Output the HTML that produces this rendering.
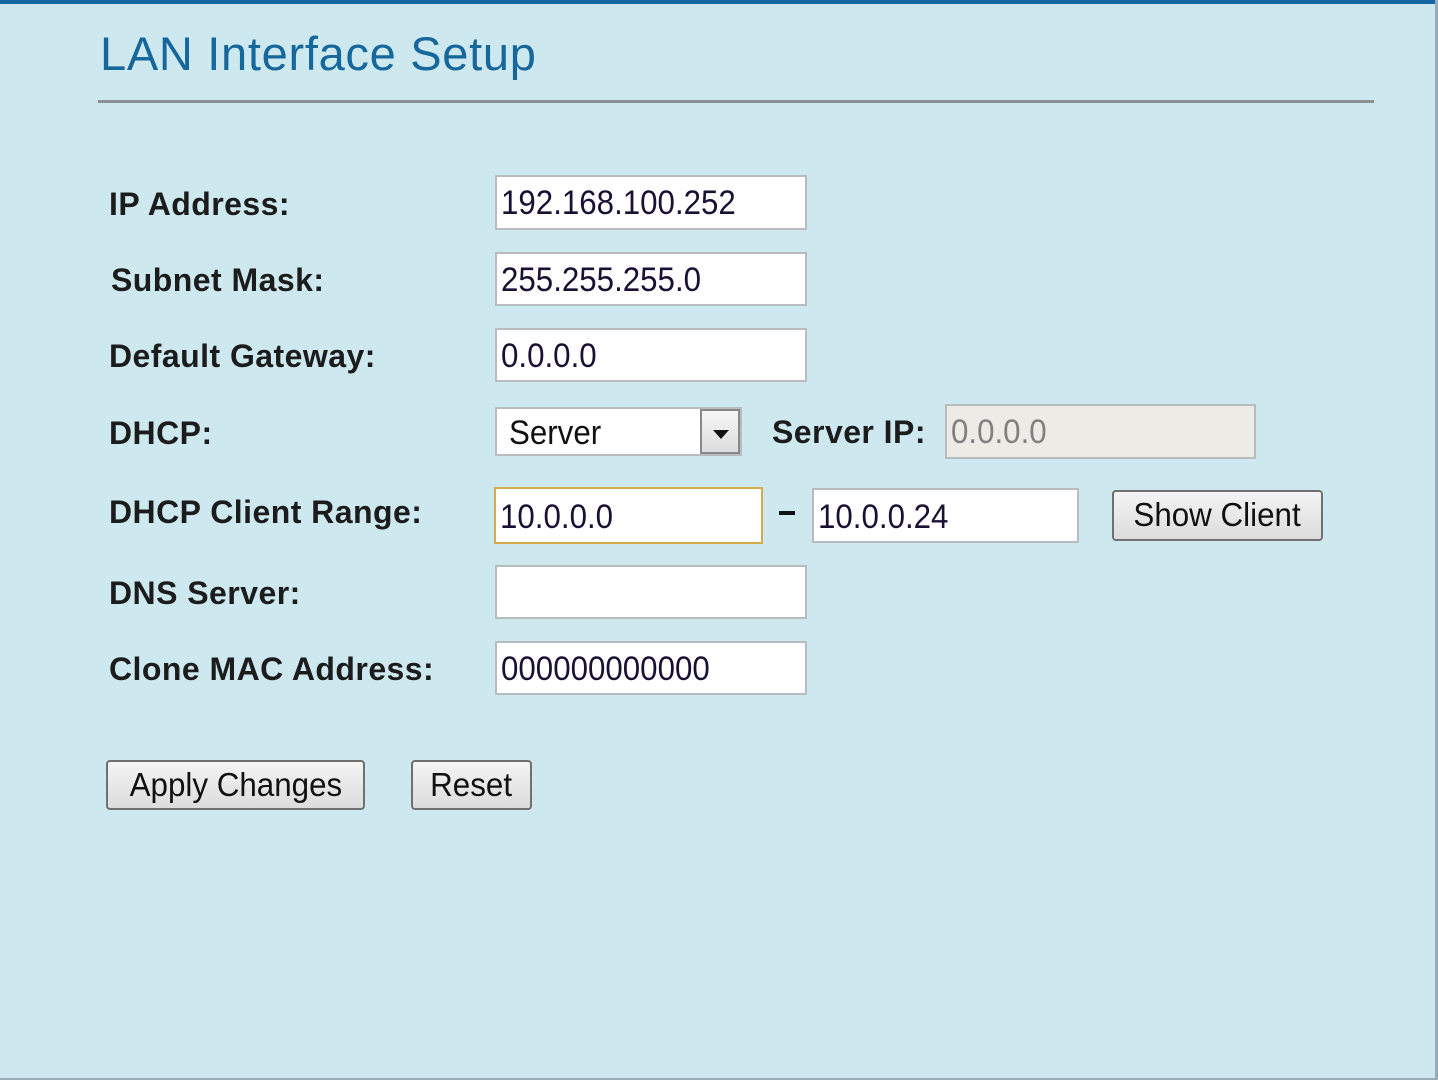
<!DOCTYPE html><html><head><style>
body{margin:0;width:1438px;height:1080px;background:#cde9ef;position:relative;overflow:hidden;font-family:"Liberation Sans",Arial,sans-serif}
.top{position:absolute;left:0;top:0;width:1438px;height:4px;background:#1466a4}
.rb{position:absolute;right:0;top:0;width:3px;height:1080px;background:#9ab}
.bb{position:absolute;left:0;bottom:0;width:1438px;height:2px;background:#9ab}
h1{position:absolute;left:100px;top:26px;margin:0;font-weight:normal;font-size:47px;color:#16679c;letter-spacing:0.7px}
.hr{position:absolute;left:98px;top:100px;width:1276px;height:3px;background:#8a8f92}
.l{position:absolute;left:109px;font-weight:bold;font-size:32px;color:#1c1c1c;line-height:40px;letter-spacing:0.45px}
.i{position:absolute;box-sizing:border-box;background:#fff;border:2px solid #b8bcbe;font-size:34px;color:#1a1033;line-height:52px;padding-left:4px;transform-origin:left;}
.i span{display:inline-block;transform:scaleX(.92);transform-origin:left}
.b{position:absolute;box-sizing:border-box;border:2px solid #707070;border-radius:4px;background:linear-gradient(#f4f4f4,#dcdcdc);font-size:33px;color:#111;text-align:center;line-height:46px}
.b span{display:inline-block;transform:scaleX(.95)}
</style></head><body>
<div class="top"></div><div class="rb"></div><div class="bb"></div>
<h1>LAN Interface Setup</h1><div class="hr"></div>
<div class="l" style="top:184px">IP Address:</div>
<div class="l" style="top:260px;left:111px">Subnet Mask:</div>
<div class="l" style="top:336px">Default Gateway:</div>
<div class="l" style="top:413px">DHCP:</div>
<div class="l" style="top:492px">DHCP Client Range:</div>
<div class="l" style="top:573px">DNS Server:</div>
<div class="l" style="top:649px">Clone MAC Address:</div>
<div class="i" style="left:495px;top:175px;width:312px;height:55px"><span>192.168.100.252</span></div>
<div class="i" style="left:495px;top:252px;width:312px;height:54px"><span>255.255.255.0</span></div>
<div class="i" style="left:495px;top:328px;width:312px;height:54px"><span>0.0.0.0</span></div>
<div class="i" style="left:495px;top:407px;width:247px;height:49px;line-height:48px;padding-left:12px;color:#111"><span>Server</span>
<div style="position:absolute;right:0;top:0;width:40px;height:45px;box-sizing:border-box;border:2px solid #888;background:linear-gradient(#f6f6f6,#ddd)"><div style="position:absolute;left:11px;top:19px;border-left:8px solid transparent;border-right:8px solid transparent;border-top:9px solid #111"></div></div></div>
<div class="l" style="top:412px;left:772px">Server IP:</div>
<div class="i" style="left:945px;top:404px;width:311px;height:55px;background:#ecebe6;color:#808080"><span>0.0.0.0</span></div>
<div class="i" style="left:494px;top:487px;width:269px;height:57px;border-color:#d9aa4c;line-height:56px"><span>10.0.0.0</span></div>
<div style="position:absolute;left:779px;top:511px;width:16px;height:4px;background:#111"></div>
<div class="i" style="left:812px;top:488px;width:267px;height:55px;line-height:55px"><span>10.0.0.24</span></div>
<div class="b" style="left:1112px;top:490px;width:211px;height:51px"><span>Show Client</span></div>
<div class="i" style="left:495px;top:565px;width:312px;height:54px"></div>
<div class="i" style="left:495px;top:641px;width:312px;height:54px"><span>000000000000</span></div>
<div class="b" style="left:106px;top:760px;width:259px;height:50px"><span>Apply Changes</span></div>
<div class="b" style="left:411px;top:760px;width:121px;height:50px"><span>Reset</span></div>
</body></html>
